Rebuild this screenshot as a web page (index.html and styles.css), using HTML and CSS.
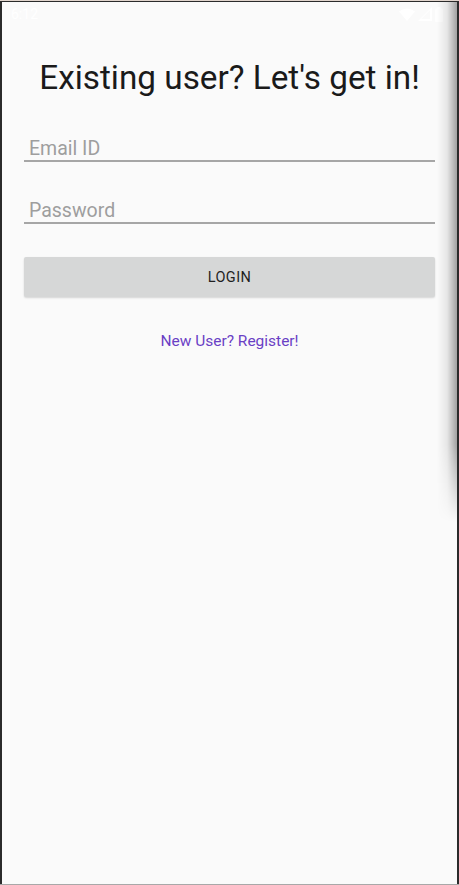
FILE: index.html
```html
<!DOCTYPE html>
<html>
<head>
<meta charset="utf-8">
<link rel="stylesheet" href="styles.css">
</head>
<body>
<div class="frame">
  <div class="screen">
    <div class="statusbar">
      <span class="time">6:12</span>
      <span class="icons">
        <svg width="16" height="13" viewBox="0 0 16 13"><path d="M0 3.5 Q8 -2.5 16 3.5 L8 13 Z" fill="#fff"/></svg>
        <svg width="14" height="14" viewBox="0 0 14 14"><path d="M14 0 L14 14 L0 14 Z M12 3 L3 12 L12 12 Z" fill="#fff" fill-rule="evenodd"/></svg>
        <svg width="8" height="15" viewBox="0 0 8 15"><rect x="2.5" y="0" width="3" height="2" fill="#fff"/><rect x="0" y="1.5" width="8" height="13.5" rx="1" fill="#fff" opacity="0.7"/></svg>
      </span>
    </div>
    <div class="content">
      <h1 class="title">Existing user? Let's get in!</h1>
      <div class="field"><span class="hint">Email ID</span></div>
      <div class="field"><span class="hint">Password</span></div>
      <button class="login">LOGIN</button>
      <a class="register">New User? Register!</a>
    </div>
    <div class="edge-shadow"></div>
  </div>
</div>
</body>
</html>
```

FILE: styles.css
```css
html, body {
  margin: 0;
  padding: 0;
  background: #2b2b2b;
  width: 459px;
  height: 885px;
  overflow: hidden;
}
.frame {
  width: 459px;
  height: 885px;
  box-sizing: border-box;
  padding: 1px 2px 0 2px;
  background: #2b2b2b;
  border-top: 1px solid #e0d4cc;
  border-bottom: 1px solid #a8a8a8;
}
.screen {
  position: relative;
  height: 100%;
  background: #fafafa;
  font-family: Roboto, "Liberation Sans", sans-serif;
  overflow: hidden;
}
.statusbar {
  height: 24px;
  display: flex;
  align-items: center;
  justify-content: space-between;
  padding: 0 14px 0 9px;
}
.time {
  color: #ffffff;
  font-size: 14px;
}
.icons {
  display: flex;
  align-items: center;
  gap: 3px;
}
.content {
  display: flex;
  flex-direction: column;
  padding: 0 22px;
}
.title {
  margin: 32px 0 0 0;
  font-weight: 400;
  font-size: 33.3px;
  line-height: 40px;
  color: #1a1a1a;
  text-align: center;
  white-space: nowrap;
}
.field {
  height: 30px;
  border-bottom: 2px solid #a6a6a6;
  display: flex;
  align-items: flex-end;
  padding-left: 5px;
  margin-top: 32px;
}
.field + .field {
  margin-top: 30px;
}
.hint {
  font-size: 19.5px;
  color: #9e9e9e;
  line-height: 19px;
  padding-bottom: 2px;
}
.login {
  margin-top: 33px;
  height: 40px;
  border: none;
  border-radius: 2px;
  background: #d6d7d7;
  box-shadow: 0 1px 2px rgba(0,0,0,0.15);
  font-family: Roboto, "Liberation Sans", sans-serif;
  font-weight: 400;
  font-size: 14.5px;
  letter-spacing: 0.4px;
  color: #1f1f1f;
}
.register {
  margin-top: 35px;
  text-align: center;
  font-size: 15.5px;
  color: #6a3fc5;
}
.edge-shadow {
  position: absolute;
  top: 0;
  right: 0;
  width: 20px;
  height: 520px;
  background: linear-gradient(to right, rgba(0,0,0,0), rgba(0,0,0,0.08) 50%, rgba(0,0,0,0.35));
  -webkit-mask-image: linear-gradient(to bottom, #000 85%, transparent);
  mask-image: linear-gradient(to bottom, #000 85%, transparent);
}
```
